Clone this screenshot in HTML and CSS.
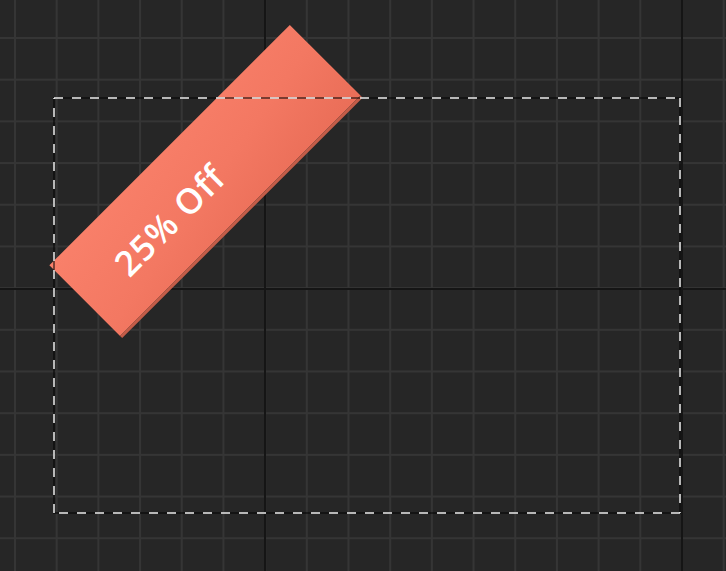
FILE: index.html
```html
<!DOCTYPE html>
<html>
<head>
<meta charset="utf-8">
<link rel="stylesheet" href="styles.css">
</head>
<body class="canvas">
  <div class="frame">
    <div class="ribbon"><span class="ribbon-text">25% Off</span></div>
    <svg class="dash" width="628" height="417" viewBox="0 0 628 417">
      <g class="dash-dark">
        <path d="M1 1 H627 V416 H1 Z"/>
      </g>
      <g class="dash-light">
        <path d="M1 1 H627"/>
        <path d="M627 1 V416"/>
        <path d="M627 416 H1"/>
        <path d="M1 416 V1"/>
      </g>
    </svg>
  </div>
</body>
</html>
```
FILE: styles.css
```css
html, body {
  margin: 0;
  height: 100%;
}

.canvas {
  box-sizing: border-box;
  padding: 97px 0 0 53px;
  background-color: #262626;
  background-image:
    linear-gradient(90deg, #151515 2px, transparent 2px),
    linear-gradient(#151515 2px, transparent 2px),
    linear-gradient(90deg, #353535 2px, transparent 2px),
    linear-gradient(#353535 2px, transparent 2px);
  background-size: 417px 417px, 417px 417px, 41.7px 41.7px, 41.7px 41.7px;
  background-position: 264px 0, 0 288px, 14px 0, 0 37px;
  overflow: hidden;
  font-family: "Open Sans", "Liberation Sans", sans-serif;
}

.frame {
  position: relative;
  width: 628px;
  height: 417px;
}

.ribbon {
  position: absolute;
  left: -17px;
  top: 33px;
  width: 340px;
  height: 103px;
  box-sizing: border-box;
  border-bottom: 3px solid #c35c48;
  background: linear-gradient(170deg, #f9806a 0%, #f37862 55%, #ea6e58 100%);
  transform: rotate(-45deg);
  display: flex;
  align-items: center;
  justify-content: center;
  padding: 4px 106px 0 0;
}

.ribbon-text {
  color: #ffffff;
  font-size: 35px;
  font-weight: 600;
  letter-spacing: 1px;
  white-space: nowrap;
}

.dash {
  position: absolute;
  left: 0;
  top: 0;
  display: block;
}

.dash path {
  fill: none;
  stroke-width: 2;
}

.dash-dark path {
  stroke: rgba(0, 0, 0, 0.5);
}

.dash-light path {
  stroke: rgba(255, 255, 255, 0.7);
  stroke-dasharray: 9 9;
}
```
